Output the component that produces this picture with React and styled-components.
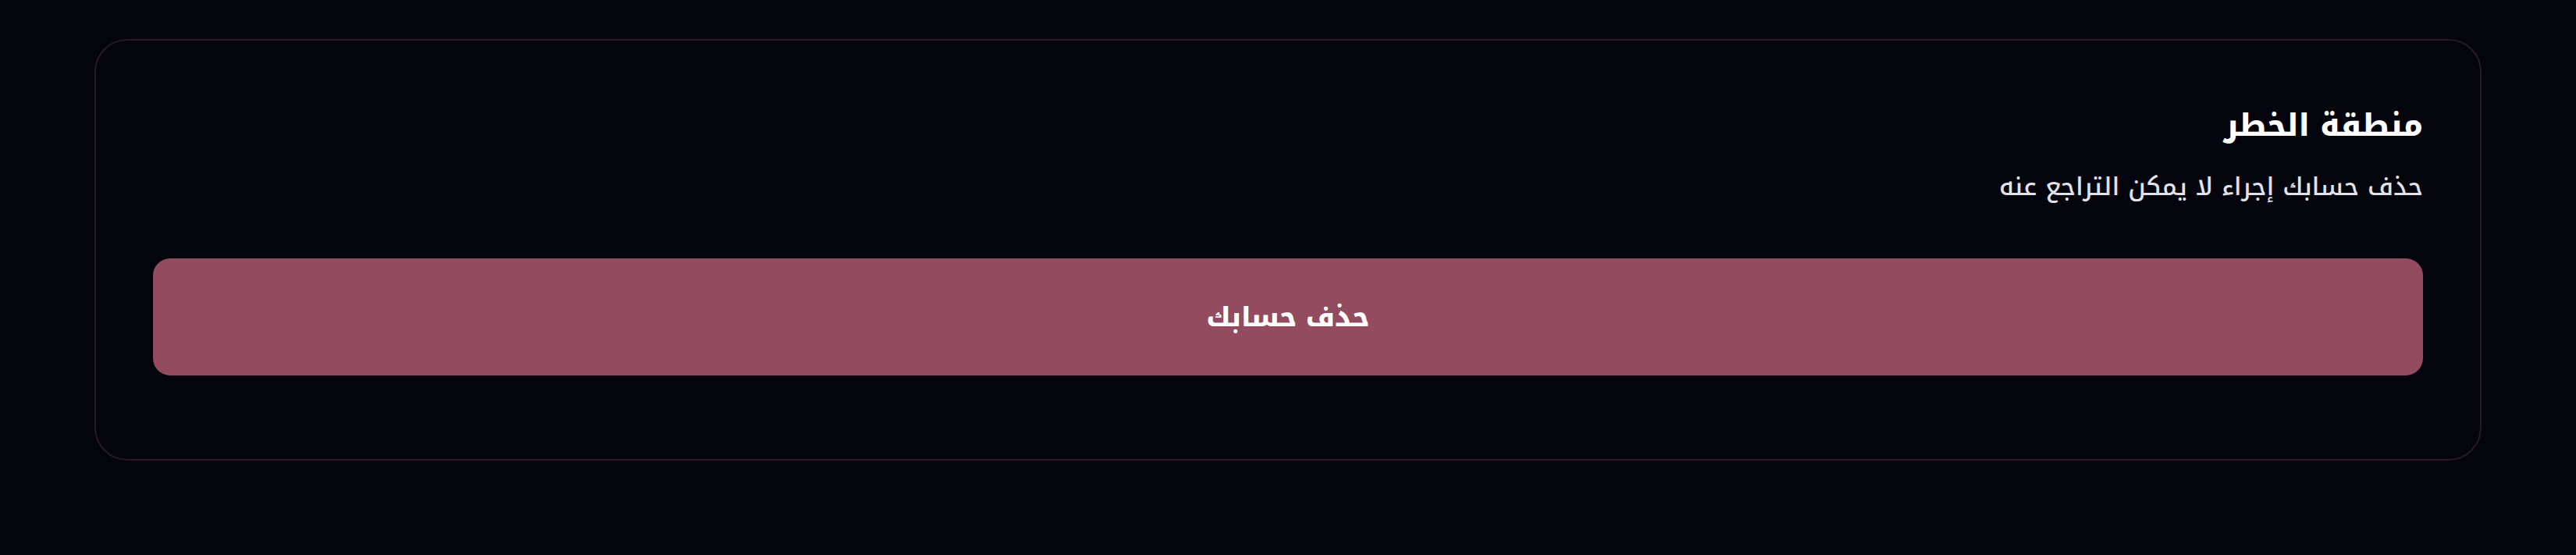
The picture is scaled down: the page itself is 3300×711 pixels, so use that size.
import React from "react";
import styled, { createGlobalStyle } from "styled-components";

const GlobalStyle = createGlobalStyle`
  html, body {
    margin: 0;
    padding: 0;
    background: #03040c;
  }
  body {
    font-family: "Noto Kufi Arabic", "Noto Sans Arabic", "DejaVu Sans", sans-serif;
  }
`;

const Page = styled.div`
  min-height: 711px;
  padding: 50px 121px;
  box-sizing: border-box;
  background: #03040c;
`;

const Card = styled.section`
  direction: rtl;
  border: 2px solid #2a1826;
  border-radius: 42px;
  padding: 73px 73px 107px;
  display: flex;
  flex-direction: column;
`;

const Title = styled.h2`
  margin: 0;
  font-size: 39px;
  line-height: 72px;
  font-weight: 800;
  color: #ffffff;
`;

const Description = styled.p`
  margin: 21px 0 0;
  font-size: 32px;
  line-height: 44px;
  font-weight: 500;
  color: #e2e2e8;
`;

const DangerButton = styled.button`
  margin-top: 69px;
  height: 150px;
  border: none;
  border-radius: 22px;
  background: #924b5f;
  color: #ffffff;
  font-family: inherit;
  font-size: 34px;
  font-weight: 800;
  cursor: pointer;
`;

export default function App() {
  return (
    <Page>
      <GlobalStyle />
      <Card>
        <Title>منطقة الخطر</Title>
        <Description>حذف حسابك إجراء لا يمكن التراجع عنه</Description>
        <DangerButton>حذف حسابك</DangerButton>
      </Card>
    </Page>
  );
}
